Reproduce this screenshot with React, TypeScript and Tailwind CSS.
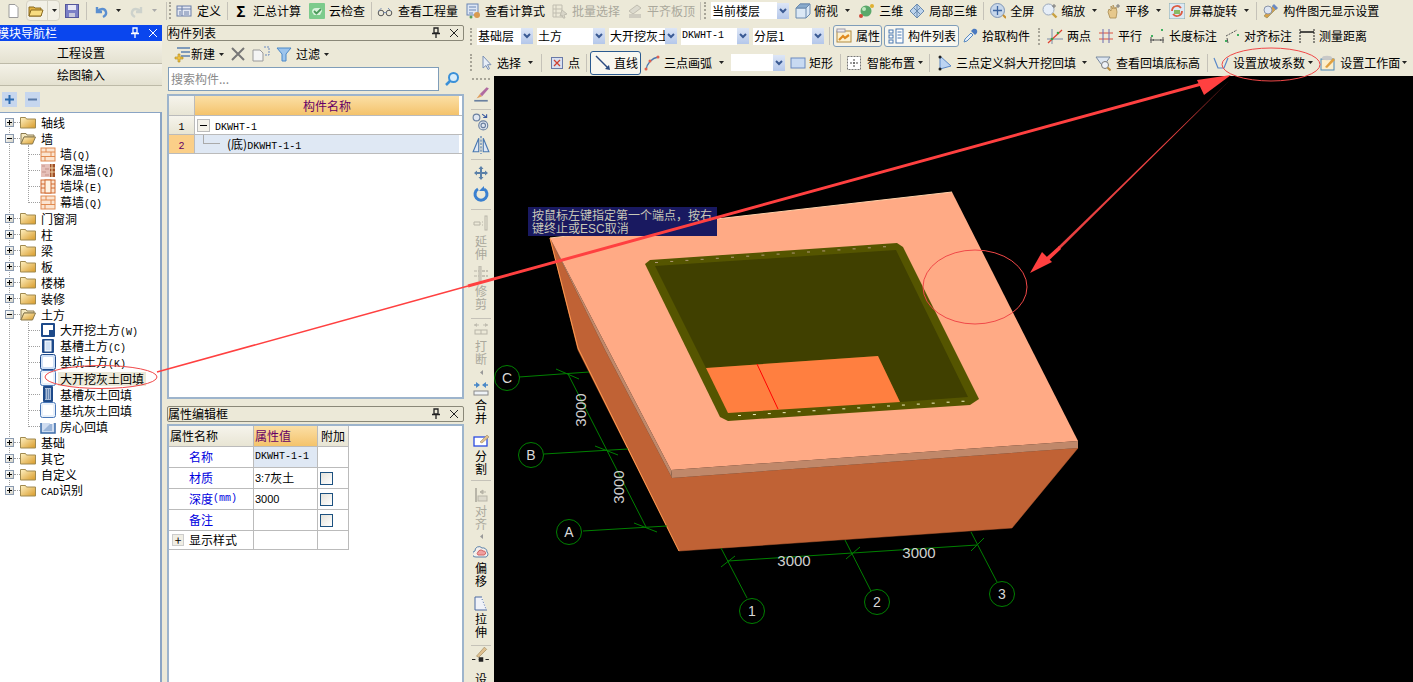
import type { ReactNode } from "react";

const Ic = ({ children, s = 16 }: { children: ReactNode; s?: number }) => (
  <svg width={s} height={s} viewBox="0 0 16 16" className="shrink-0">
    {children}
  </svg>
);

const Arrow = ({ className = "" }: { className?: string }) => (
  <svg width="5" height="3" viewBox="0 0 5 3" className={`shrink-0 ${className}`}>
    <path d="M0 0h5L2.5 3z" fill="#222" />
  </svg>
);

const ArrowGray = ({ className = "" }: { className?: string }) => (
  <svg width="5" height="3" viewBox="0 0 5 3" className={`shrink-0 ${className}`}>
    <path d="M0 0h5L2.5 3z" fill="#aaa" />
  </svg>
);

const Sep = ({ className = "" }: { className?: string }) => (
  <div className={`h-[18px] w-px shrink-0 bg-[#c5c2b8] ${className}`} />
);

const Grip = ({ className = "" }: { className?: string }) => (
  <div className={`h-[17px] w-[2px] shrink-0 border-l-2 border-dotted border-[#a8a598] ${className}`} />
);

const Combo = ({ w, text, className = "" }: { w: string; text?: ReactNode; className?: string }) => (
  <div className={`flex h-[17px] shrink-0 items-center ${className}`}>
    <div className={`flex h-[17px] items-center overflow-hidden whitespace-nowrap bg-white pl-px ${w}`}>{text}</div>
    <div className="flex h-[16px] w-[12px] items-center justify-center bg-gradient-to-b from-[#dde6f6] to-[#b4c7ea]">
      <svg width="8" height="6" viewBox="0 0 8 6">
        <path d="M1 1l3 3 3-3" fill="none" stroke="#3a5a94" strokeWidth="2" />
      </svg>
    </div>
  </div>
);

const Mono = ({ children }: { children: ReactNode }) => (
  <span className="font-['Liberation_Mono',monospace] text-[10px]">{children}</span>
);

/* toolbar icons */
const IFile = () => <Ic><path d="M4 1.5h6l3 3v10H4z" fill="#fff" stroke="#9a9a9a" /></Ic>;
const IOpen = () => <Ic><path d="M1 4h5l1 1h6v8H1z" fill="#e0b040" stroke="#8a6a20" /><path d="M3 7h12l-2 6H1z" fill="#f8dc80" stroke="#8a6a20" /></Ic>;
const ISave = () => <Ic><rect x="1.5" y="1.5" width="13" height="13" fill="#7b7fc6" stroke="#55579a" /><rect x="4" y="2" width="8" height="5" fill="#e8e8f4" /><rect x="5" y="10" width="6" height="4" fill="#c8c8dc" /></Ic>;
const IUndo = ({ c = "#5b8fd0" }: { c?: string }) => <Ic><path d="M4 4v5h5M4.5 8.5C7 5 12 5 13 9c.5 2-1 4-3 5" fill="none" stroke={c} strokeWidth="2.4" /></Ic>;
const IRedo = () => <Ic><path d="M12 4v5H7M11.500 8.500C9 5 4 5 3 9c-.5 2 1 4 3 5" fill="none" stroke="#cdd2cc" strokeWidth="2.4" /></Ic>;
const IDefine = () => <Ic><rect x="1" y="3" width="14" height="10" fill="#e4e8f2" stroke="#6a7fa8" /><path d="M6 3v10M1 6h14M8 9h5M8 11h5M3 9h2M3 11h2" stroke="#6a7fa8" /></Ic>;
const ICloud = () => <Ic><rect x="0" y="0" width="16" height="16" rx="1" fill="#7ccb8c" /><path d="M3 9a4 4 0 0 1 4-4h3a3 3 0 0 1 3 3l-2 4H5z" fill="#d8f2dc" /><path d="M5 8l2.500 2.500L12 6" fill="none" stroke="#4a9a5a" strokeWidth="1.800" /></Ic>;
const IGlasses = () => <Ic><circle cx="4" cy="10" r="2.800" fill="none" stroke="#555" /><circle cx="12" cy="10" r="2.800" fill="none" stroke="#555" /><path d="M6.500 9.500h3M1.500 8l3-3M11 5l3 3" stroke="#7a90b4" /></Ic>;
const ICalc = () => <Ic><rect x="1" y="1" width="11" height="11" fill="#dde6f4" stroke="#6a86b4" /><path d="M3 4h7M3 7h7M3 10h4" stroke="#6a86b4" /><circle cx="11" cy="12" r="3" fill="#d89a50" /><circle cx="5" cy="14" r="1.500" fill="#5aa05a" /></Ic>;
const IBatch = () => <Ic><path d="M1 2h9v12H1zM4 2v12M1 6h9M1 10h9" fill="none" stroke="#c0bdb0" /><path d="M10 7l5 4-3 1 1 3-2 0-1-3-2 1z" fill="#d8d5c8" stroke="#c0bdb0" /></Ic>;
const IAlignTop = () => <Ic><path d="M2 8l8-6 4 3-8 6z" fill="#dcdace" stroke="#c0bdb0" /><rect x="2" y="11" width="12" height="4" fill="#cfccc0" /></Ic>;
const ICube = () => <Ic><path d="M1 5l4-4h10v10l-4 4H1z" fill="#dbe8f5" stroke="#6a8aae" /><path d="M1 5h10v10M11 5l4-4" fill="none" stroke="#6a8aae" /><path d="M1 5h10L15 1H5z" fill="#88aacc" stroke="#6a8aae" /></Ic>;
const I3D = () => <Ic><circle cx="7" cy="8" r="5.500" fill="#5aa86a" /><circle cx="5" cy="6" r="2" fill="#bfe8c0" /><circle cx="2" cy="13" r="2" fill="#d04a3a" /><circle cx="13" cy="3" r="2" fill="#e0b030" /></Ic>;
const ILocal3D = () => <Ic><path d="M1 8l7-7 7 7-7 7z" fill="#bcd3ec" stroke="#6a8aae" /><path d="M4.500 4.500l7 7M11.500 4.500l-7 7M8 1v14" stroke="#6a8aae" /></Ic>;
const IFull = () => <Ic><circle cx="7.500" cy="7.500" r="7" fill="#c6d6ea" stroke="#7f95b5" /><path d="M7.500 3v9M3 7.500h9" stroke="#3c64a0" strokeWidth="1.300" /><path d="M13 12l3 3" stroke="#c89030" strokeWidth="2" /></Ic>;
const IZoom = () => <Ic><circle cx="6.500" cy="6.500" r="5.500" fill="#e6eef8" stroke="#9aa8bc" /><path d="M10.500 10.500l4 4" stroke="#c8a040" strokeWidth="2.400" /><path d="M12 1v4M10 3h4" stroke="#777" /></Ic>;
const IPan = () => <Ic><path d="M3 9l1-3 2 2V3l2 3V2l2 4 1-2 1 5-1 6H5z" fill="#e6c88c" stroke="#a88a50" strokeWidth=".8" /><path d="M13 1v4M11 3h4" stroke="#777" /></Ic>;
const IRot = () => <Ic><rect width="16" height="16" fill="#dce8f4" stroke="#8aa" /><path d="M3 8a5 5 0 0 1 9-3M13 8a5 5 0 0 1-9 3" fill="none" stroke="#dc5a40" strokeWidth="1.800" /><rect x="5" y="7" width="6" height="4" fill="#88bb66" /></Ic>;
const IDisplay = () => <Ic><path d="M1 13L10 3l3 3-9 9z" fill="#d8a048" stroke="#885" strokeWidth=".6" /><circle cx="5" cy="7" r="4" fill="#dfe6f2" stroke="#8a94a8" /><path d="M11 1l4 4-2 2-4-4z" fill="#6a8ac4" /></Ic>;
const IProp = () => <Ic><rect x="1" y="3" width="14" height="11" fill="#fdf1cf" stroke="#b08a40" /><rect x="1" y="1" width="8" height="3" fill="#eeeaf0" stroke="#9a9aa8" /><path d="M3 12l4-4 2 2 4-3" fill="none" stroke="#e08a20" strokeWidth="2.200" /></Ic>;
const IList = () => <Ic><rect x="1" y="2" width="4" height="3" fill="#fff" stroke="#4a78b0" /><rect x="1" y="7" width="4" height="3" fill="#fff" stroke="#4a78b0" /><rect x="1" y="12" width="4" height="3" fill="#fff" stroke="#4a78b0" /><rect x="8" y="1" width="7" height="14" fill="#fff" stroke="#4a78b0" /><path d="M9.500 4h4M9.500 7h4M9.500 10h4" stroke="#4a78b0" /></Ic>;
const IPicker = () => <Ic><path d="M2 14l1-3 6-6 2 2-6 6z" fill="#e6f0fa" stroke="#5a8ac0" /><path d="M9 3l4 4 2-2c1-3-1-5-4-4z" fill="#4a7ac0" /></Ic>;
const ITwoPt = () => <Ic><path d="M0 11h16M5 1v15" stroke="#7a8aa8" /><path d="M1 15L15 2" stroke="#e04030" strokeWidth="1.200" /><circle cx="5" cy="11" r="1.300" fill="#40a040" /><circle cx="11" cy="5" r="1.300" fill="#40a040" /></Ic>;
const IParallel = () => <Ic><path d="M1 5h14M1 11h14" stroke="#dc5040" /><path d="M5 1v14M11 1v14" stroke="#6a6ab0" /></Ic>;
const ILenDim = () => <Ic><path d="M1 12h14M2 9v6M14 9v6" stroke="#555" /><path d="M3 12l2-1v2zM13 12l-2-1v2z" fill="#555" /><rect x="2" y="7" width="2" height="2" fill="#40b060" /><rect x="12" y="1" width="2" height="2" fill="#40b060" /></Ic>;
const IAlignDim = () => <Ic><path d="M2 8L13 2" stroke="#555" strokeDasharray="2 1" /><path d="M3 10l1 5" stroke="#555" /><rect x="1" y="12" width="2" height="2" fill="#40b060" /><rect x="13" y="6" width="2" height="2" fill="#40b060" /></Ic>;
const IMeasure = () => <Ic><path d="M1 1v14M15 1v14" stroke="#222" strokeDasharray="2 1" /><path d="M1 4h14" stroke="#222" strokeWidth="1.600" /></Ic>;
const ICursor = () => <Ic><path d="M5 1v12l3-2.500 2 4 1.500-.8-2-4H13z" fill="#e8eef8" stroke="#7a90b4" /></Ic>;
const IPoint = () => <Ic><rect x="2.500" y="2.500" width="11" height="11" fill="#d8e0f0" stroke="#6a7aa8" /><path d="M5 5l6 6M11 5l-6 6" stroke="#d04030" strokeWidth="1.300" /></Ic>;
const ILine = () => <Ic><path d="M1 1l12 12" stroke="#2a4a80" strokeWidth="1.400" /><path d="M15 15l-5-1 4-4z" fill="#2a4a80" /></Ic>;
const IArc = () => <Ic><path d="M2 15C3 8 8 3 14 2" fill="none" stroke="#4a78b0" strokeWidth="1.300" /><circle cx="2" cy="14" r="1.500" fill="#e06050" /><circle cx="6" cy="6" r="1.500" fill="#e06050" /><circle cx="14" cy="2" r="1.500" fill="#e06050" /></Ic>;
const IRect = () => <Ic><rect x="1" y="3" width="14" height="10" fill="#c8daf2" stroke="#6a8ac0" /></Ic>;
const ISmart = () => <Ic><rect x="1.500" y="1.500" width="13" height="13" fill="#fff" stroke="#777" strokeDasharray="2 1" /><path d="M8 4v8M4 8h8" stroke="#444" strokeDasharray="2 1" /></Ic>;
const ITriPt = () => <Ic><path d="M3 1v13l11-3z" fill="#bcd4f2" stroke="#5a88c8" /><circle cx="3" cy="2" r="1.500" fill="#222" /><circle cx="3" cy="14" r="1.500" fill="#222" /></Ic>;
const IBottom = () => <Ic><path d="M1 2h14L10 9v3L6 9z" fill="#dde6f0" stroke="#7a8aa0" /><circle cx="10" cy="10" r="3.500" fill="#eef2f8" stroke="#7a7a7a" /><path d="M12.500 12.500l3 3" stroke="#c09040" strokeWidth="2" /></Ic>;
const ISlope = () => <Ic><path d="M1 3l4 10h6l4-10" fill="none" stroke="#5a88c8" strokeWidth="1.200" /></Ic>;
const IWorkPlane = () => <Ic><rect x="1" y="4" width="13" height="11" fill="#fbeecb" stroke="#4a88b8" /><ellipse cx="7" cy="3" rx="5" ry="2.200" fill="#c8c8c8" /><path d="M5 12l8-9 2 2-8 8z" fill="#e0a040" /></Ic>;

/* tree icons */
const IFolder = () => <Ic><path d="M0.500 3.500h5l1 1.500h9v9h-15z" fill="url(#fold)" stroke="#a08a50" /></Ic>;
const IFolderOpen = () => <Ic><path d="M1 3.500h5l1 1.500h7v2H4L1 14z" fill="#f4e8c0" stroke="#8a7a50" /><path d="M4 7h11.500l-3 7H1z" fill="url(#fold)" stroke="#8a7a50" /></Ic>;
const IBrick = () => <Ic><rect x="1" y="2" width="14" height="13" fill="#fbe4d0" stroke="#e08a50" /><path d="M1 6h14M1 10.500h14M6 2v4M11 6v4.500M5 10.500V15" stroke="#e08a50" /></Ic>;
const IInsul = () => <Ic><rect x="1" y="2" width="9" height="13" fill="#e6c0b8" /><path d="M2 4h3M5 7h4M2 10h4M5 13h4" stroke="#c49088" /><rect x="10" y="2" width="5" height="13" fill="#a05028" /><path d="M12 2v13M10 6h5M10 10h5" stroke="#f0d0a0" /></Ic>;
const IPier = () => <Ic><rect x="1" y="2" width="14" height="13" fill="#fbe4d0" stroke="#d06a30" /><rect x="5" y="2" width="6" height="13" fill="#fff4e4" stroke="#d06a30" /><path d="M11 6h4M11 10h4M1 6h4M1 10h4" stroke="#d06a30" /></Ic>;
const IExc1 = () => <Ic><rect x="1" y="1" width="14" height="14" rx="1" fill="#1e4a8a" /><path d="M3 3h10v5H9v5H3z" fill="#fff" /></Ic>;
const IExc2 = () => <Ic><rect x="2" y="1" width="12" height="14" rx="1" fill="#1e4a8a" /><rect x="5" y="3" width="6" height="10" fill="#cfe0f4" stroke="#fff" /></Ic>;
const IExc3 = () => <Ic><rect x=".5" y=".5" width="15" height="15" rx="2" fill="#cfe0f6" stroke="#1e4a8a" /><rect x="3" y="3" width="10" height="10" rx="1" fill="#fff" /></Ic>;
const IExc4 = () => <Ic><rect x=".5" y=".5" width="15" height="15" rx="2" fill="#e8f0fa" stroke="#4a78b8" /><rect x="3" y="3" width="10" height="10" fill="#fff" /></Ic>;
const IExc5 = () => <Ic><rect x="3" y="0" width="10" height="16" rx="1" fill="#1e4a8a" /><rect x="5" y="2" width="6" height="12" fill="#a8bcd8" /><path d="M5 4h6M5 6h6M5 8h6M5 10h6M5 12h6" stroke="#1e4a8a" strokeDasharray="1 1" /></Ic>;
const IRoom = () => <Ic><path d="M1 5v10h14V5" fill="#cfdcf0" stroke="#3a6aa8" strokeWidth="1.500" /><path d="M3 13l9-9v9z" fill="#9ab4d8" /><rect x="10" y="3" width="3" height="3" fill="#fff" /></Ic>;

/* side bar icons */
const IBrush = () => <Ic s={18}><path d="M2 14h12" stroke="#6a80a0" strokeWidth="1.500" /><path d="M4 12l3-4 2 2z" fill="#e0a060" /><path d="M7 8l6-6 2 1-6 7z" fill="#b06aa0" /></Ic>;
const ICircles = () => <Ic s={18}><circle cx="4" cy="4" r="3" fill="#dfe6f0" stroke="#6a80a0" /><circle cx="10" cy="11" r="4" fill="#dfe6f0" stroke="#6a80a0" /><circle cx="10" cy="11" r="2" fill="none" stroke="#6a80a0" /><path d="M9 1l4 3M13 1v3h-3" fill="none" stroke="#3a5aa0" /></Ic>;
const IMirror = () => <Ic s={18}><path d="M6 2L1 14h5zM10 2l5 12h-5z" fill="#dfe8f4" stroke="#4a78b0" /><path d="M8 0v16" stroke="#4a78b0" strokeDasharray="2 1" /></Ic>;
const IMove = () => <Ic s={16}><path d="M8 1l2.500 3H9v3h3V5.500L15 8l-3 2.500V9H9v3h1.500L8 15l-2.500-3H7V9H4v1.500L1 8l3-2.500V7h3V4H5.500z" fill="#5a80a8" /></Ic>;
const IRotate = () => <Ic s={16}><path d="M5 3a6 6 0 1 0 6 0" fill="none" stroke="#3a80d0" strokeWidth="3" /><path d="M11 0v5h-5z" fill="#3a80d0" /></Ic>;
const IExtend = () => <Ic s={16}><path d="M1 7h6v3H1zM9 7h1M9 10h1" fill="none" stroke="#b8b5a8" /><rect x="12" y="1" width="2" height="14" fill="none" stroke="#b8b5a8" /></Ic>;
const ITrim = () => <Ic s={16}><path d="M1 5h14M1 10h14M9 5h6M9 10h6" stroke="#b8b5a8" strokeDasharray="3 1" /><rect x="6" y="0" width="2" height="15" fill="#dcd9cc" stroke="#b8b5a8" /></Ic>;
const IBreak = () => <Ic s={16}><path d="M1 4h5M15 4h-5" stroke="#c0bdb0" /><path d="M1 4l3-2v4zM15 4l-3-2v4z" fill="#c0bdb0" /><rect x="2" y="9" width="12" height="4" fill="none" stroke="#b8b5a8" /><path d="M8 9v4" stroke="#b8b5a8" /></Ic>;
const IMerge = () => <Ic s={16}><path d="M1 3h5M15 3h-5" stroke="#4a88c8" strokeWidth="1.300" /><path d="M7 3L3 0v6zM9 3l4-3v6z" fill="#4a88c8" /><rect x="1" y="9" width="14" height="4" fill="#eef2f6" stroke="#888" /></Ic>;
const ISplit = () => <Ic s={16}><rect x="1" y="5" width="13" height="9" fill="#fff" stroke="#2a4ae0" strokeWidth="1.300" /><path d="M7 10l7-7 2 2-7 6z" fill="#e0c090" stroke="#a08a60" strokeWidth=".6" /></Ic>;
const IAlignSide = () => <Ic s={16}><path d="M3 1v14" stroke="#b8b5a8" strokeWidth="2" /><rect x="5" y="9" width="9" height="5" fill="#dcd9cc" stroke="#b8b5a8" /><path d="M13 5H7M7 5l3-2v4z" fill="#b8b5a8" stroke="#b8b5a8" /></Ic>;
const IOffset = () => <Ic s={16}><path d="M3 13a3 3 0 0 1-1-6 4 4 0 0 1 7-3 4 4 0 0 1 5 4 3 3 0 0 1-1 5z" fill="#f4f0ec" stroke="#5a80a8" /><path d="M5 11a2 2 0 0 1 0-3 3 3 0 0 1 5-1 2 2 0 0 1 1 4z" fill="#f0a0a0" stroke="#d06060" /></Ic>;
const IStretch = () => <Ic s={16}><path d="M2 1h7l5 13H2z" fill="#f0f2f8" /><path d="M2 1h7M2 1v13h12" fill="none" stroke="#4a68a0" /><path d="M9 3l4 10" stroke="#4a68a0" strokeDasharray="1 2" /></Ic>;
const ISet = () => <Ic s={18}><path d="M0 12h16" stroke="#222" strokeDasharray="3 3" /><path d="M4 9l7-8 2 2-7 7z" fill="#e0c090" stroke="#a08a60" strokeWidth=".6" /><rect x="6" y="10" width="4" height="4" fill="#222" /></Ic>;

const treeData: { label: ReactNode; open?: boolean; kids?: { label: ReactNode; icon: ReactNode; sel?: boolean }[] }[] = [
  { label: "轴线" },
  {
    label: "墙",
    open: true,
    kids: [
      { label: <>墙<Mono>(Q)</Mono></>, icon: <IBrick /> },
      { label: <>保温墙<Mono>(Q)</Mono></>, icon: <IInsul /> },
      { label: <>墙垛<Mono>(E)</Mono></>, icon: <IPier /> },
      { label: <>幕墙<Mono>(Q)</Mono></>, icon: <IBrick /> },
    ],
  },
  { label: "门窗洞" },
  { label: "柱" },
  { label: "梁" },
  { label: "板" },
  { label: "楼梯" },
  { label: "装修" },
  {
    label: "土方",
    open: true,
    kids: [
      { label: <>大开挖土方<Mono>(W)</Mono></>, icon: <IExc1 /> },
      { label: <>基槽土方<Mono>(C)</Mono></>, icon: <IExc2 /> },
      { label: <>基坑土方<Mono>(K)</Mono></>, icon: <IExc3 /> },
      { label: "大开挖灰土回填", icon: <IExc4 />, sel: true },
      { label: "基槽灰土回填", icon: <IExc5 /> },
      { label: "基坑灰土回填", icon: <IExc4 /> },
      { label: "房心回填", icon: <IRoom /> },
    ],
  },
  { label: "基础" },
  { label: "其它" },
  { label: "自定义" },
  { label: <><Mono>CAD</Mono>识别</> },
];

const Expander = ({ open }: { open?: boolean }) => (
  <div className="relative flex h-[9px] w-[9px] shrink-0 items-center justify-center border border-[#8a9ab0] bg-gradient-to-br from-white to-[#d8d5c8]">
    <div className="h-px w-[5px] bg-black" />
    {!open && <div className="absolute h-[5px] w-px bg-black" />}
  </div>
);

const TitleBtns = ({ dark }: { dark?: boolean }) => {
  const c = dark ? "#fff" : "#222";
  return (
    <div className="flex items-center gap-[6px]">
      <svg width="12" height="12" viewBox="0 0 12 12">
        <path d="M4 1h4v5H4zM2 6.500h8M6 7v4" fill="none" stroke={c} strokeWidth="1.300" />
      </svg>
      <svg width="12" height="12" viewBox="0 0 12 12">
        <path d="M2 2l8 8M10 2l-8 8" stroke={c} />
      </svg>
    </div>
  );
};

const Check = () => <div className="h-[13px] w-[13px] border border-[#1c5180] bg-gradient-to-br from-[#e4e2da] to-white" />;

const propRows: { name: ReactNode; val?: ReactNode; check?: boolean; sel?: boolean }[] = [
  { name: "名称", val: <Mono>DKWHT-1-1</Mono>, sel: true },
  { name: "材质", val: <><span className="font-['Liberation_Sans',sans-serif] text-[11px]">3:7</span>灰土</>, check: true },
  { name: <>深度<Mono>(mm)</Mono></>, val: <span className="font-['Liberation_Sans',sans-serif] text-[11px]">3000</span>, check: true },
  { name: "备注", check: true },
];

const VText = ({ chars, gray, className = "" }: { chars: string[]; gray?: boolean; className?: string }) => (
  <div className={`flex flex-col items-center text-[12px] leading-[13px] ${gray ? "text-[#aaa89c]" : "text-black"} ${className}`}>
    {chars.map((c) => (
      <span key={c}>{c}</span>
    ))}
  </div>
);

const VSep = ({ className = "" }: { className?: string }) => <div className={`h-px w-[20px] shrink-0 bg-[#c5c2b8] ${className}`} />;
const LeftTri = ({ className = "" }: { className?: string }) => (
  <svg width="3" height="5" viewBox="0 0 3 5" className={className}>
    <path d="M3 0v5L0 2.500z" fill="#999" />
  </svg>
);

function Scene() {
  const top = Array.from({ length: 16 }, (_, i) => [655 + i * 15.2, 262.5 - i * 1.05]);
  const bottom = Array.from({ length: 16 }, (_, i) => [738 + i * 14.9, 415.5 - i * 0.95]);
  const g = "#008000";
  return (
    <svg width="919" height="606" viewBox="494 76 919 606" className="block">
      {/* left and front faces */}
      <polygon points="550,238 578,350 679,551 1012,528 1078,448 672,478 605,350" fill="#c06235" stroke="#c06235" strokeWidth="0.500" />
      <polygon points="550,238 671,470 672,478 605,350" fill="#c0886a" />
      <polygon points="671,470 1078,441 1078,448 672,478" fill="#c0886a" />
      <polygon points="550,238 952,192 1078,441 671,470" fill="#ffaa85" />
      <path d="M550 238L952 192" stroke="#ffd0a8" strokeWidth="1" />
      <path d="M550 238L578 348L679 551" fill="none" stroke="#ff9a50" strokeWidth="1" />
      {/* pit */}
      <polygon points="645,264 650,260 897,243 903,247 979,399 970,405 728,421 720,417" fill="#555500" />
      <polygon points="655,266 896,250 968,397 900,402 878,356 706,368" fill="#404000" />
      <polygon points="706,368 878,356 900,402 728,413" fill="#ff7f40" />
      <path d="M757 364L778 409" stroke="#ff0000" strokeWidth="1" />
      {top.map(([x, y]) => (
        <path key={x} d={`M${x} ${y}h3`} stroke="#b09878" strokeWidth="1" />
      ))}
      {bottom.map(([x, y]) => (
        <path key={x} d={`M${x} ${y}h3`} stroke="#f4f0c0" strokeWidth="1" />
      ))}
      {/* grid axes */}
      <g stroke={g} strokeWidth="1" fill="none">
        <path d="M519 377L589 372M544 454L628 449M583 531L667 526M568 374L646 527" />
        <path d="M556 369L579 379M595 446L618 455M634 523L657 532" />
        <path d="M728 561L977 545M721 548L747 598M845 540L871 591M971 532L997 582" />
        <path d="M721 567L735 556M846 559L860 547M971 551L984 538" />
        <circle cx="507" cy="378" r="12.500" />
        <circle cx="531" cy="455" r="12.500" />
        <circle cx="569" cy="532" r="12.500" />
        <circle cx="752" cy="611" r="12.500" />
        <circle cx="877" cy="602" r="12.500" />
        <circle cx="1002" cy="594" r="12.500" />
      </g>
      <g fill="#d8d8d8" fontFamily="Liberation Sans, sans-serif" fontSize="14" textAnchor="middle">
        <text x="507" y="383">C</text>
        <text x="531" y="460">B</text>
        <text x="569" y="537">A</text>
        <text x="752" y="616">1</text>
        <text x="877" y="607">2</text>
        <text x="1002" y="599">3</text>
      </g>
      <g fill="#d0d0d0" fontFamily="Liberation Sans, sans-serif" fontSize="15" textAnchor="middle">
        <text x="794" y="566">3000</text>
        <text x="919" y="558">3000</text>
        <text x="0" y="0" transform="translate(586 410) rotate(-90)">3000</text>
        <text x="0" y="0" transform="translate(624 487) rotate(-90)">3000</text>
      </g>
    </svg>
  );
}

export default function App() {
  return (
    <div className="relative flex h-[682px] w-[1413px] flex-col overflow-hidden bg-[#ece9d8] font-['Noto_Sans_CJK_SC',sans-serif] text-[12px] leading-[14px] text-black">
      <svg width="0" height="0" className="absolute">
        <defs>
          <linearGradient id="fold" x1="0" y1="0" x2="1" y2="1">
            <stop offset="0" stopColor="#fff2c4" />
            <stop offset="1" stopColor="#d89a28" />
          </linearGradient>
        </defs>
      </svg>

      {/* main toolbar */}
      <div className="flex h-[23px] shrink-0 items-center whitespace-nowrap pb-[2px]">
        <div className="ml-[5px]"><IFile /></div>
        <div className="ml-[5px] flex h-[21px] w-[34px] shrink-0 items-center rounded-sm border border-[#d5d2c4] bg-[#f2f0e6] pl-px">
          <IOpen />
          <div className="ml-[3px] h-[19px] w-px bg-[#d5d2c4]" />
          <Arrow className="ml-[4px]" />
        </div>
        <div className="ml-[4px]"><ISave /></div>
        <Sep className="ml-[6px]" />
        <div className="ml-[6px]"><IUndo /></div>
        <Arrow className="ml-[7px]" />
        <div className="ml-[8px]"><IRedo /></div>
        <ArrowGray className="ml-[7px]" />
        <Sep className="ml-[9px]" />
        <Grip className="ml-[2px]" />
        <div className="ml-[5px]"><IDefine /></div>
        <span className="ml-[5px]">定义</span>
        <Sep className="ml-[6px]" />
        <div className="ml-[5px] flex w-[16px] justify-center text-[15px] font-bold">Σ</div>
        <span className="ml-[4px]">汇总计算</span>
        <div className="ml-[8px]"><ICloud /></div>
        <span className="ml-[4px]">云检查</span>
        <Sep className="ml-[6px]" />
        <div className="ml-[5px]"><IGlasses /></div>
        <span className="ml-[5px]">查看工程量</span>
        <div className="ml-[8px]"><ICalc /></div>
        <span className="ml-[3px]">查看计算式</span>
        <div className="ml-[7px]"><IBatch /></div>
        <span className="ml-[4px] text-[#aaa89c]">批量选择</span>
        <div className="ml-[7px]"><IAlignTop /></div>
        <span className="ml-[4px] text-[#aaa89c]">平齐板顶</span>
        <Sep className="ml-[5px]" />
        <Grip className="ml-[3px]" />
        <Combo w="w-[66px]" text="当前楼层" className="ml-[5px]" />
        <div className="ml-[6px]"><ICube /></div>
        <span className="ml-[3px]">俯视</span>
        <Arrow className="ml-[7px]" />
        <div className="ml-[9px]"><I3D /></div>
        <span className="ml-[4px]">三维</span>
        <div className="ml-[6px]"><ILocal3D /></div>
        <span className="ml-[4px]">局部三维</span>
        <Sep className="ml-[6px]" />
        <div className="ml-[6px]"><IFull /></div>
        <span className="ml-[4px]">全屏</span>
        <div className="ml-[8px]"><IZoom /></div>
        <span className="ml-[3px]">缩放</span>
        <Arrow className="ml-[7px]" />
        <div className="ml-[8px]"><IPan /></div>
        <span className="ml-[4px]">平移</span>
        <Arrow className="ml-[7px]" />
        <div className="ml-[8px]"><IRot /></div>
        <span className="ml-[4px]">屏幕旋转</span>
        <Arrow className="ml-[7px]" />
        <Sep className="ml-[7px]" />
        <div className="ml-[6px]"><IDisplay /></div>
        <span className="ml-[4px]">构件图元显示设置</span>
      </div>

      <div className="flex min-h-0 flex-1">
        {/* navigation panel */}
        <div className="flex w-[162px] shrink-0 flex-col pt-[2px]">
          <div className="flex h-[16px] shrink-0 items-center justify-between bg-[#0a46ee] pr-[3px] whitespace-nowrap text-white">
            <span className="-ml-[3px]">模块导航栏</span>
            <TitleBtns dark />
          </div>
          <div className="flex h-[23px] shrink-0 items-center justify-center border-b border-[#bdbaa8] bg-gradient-to-b from-[#f4f2e8] to-[#e4e1d0] pt-px">工程设置</div>
          <div className="flex h-[22px] shrink-0 items-center justify-center border-b border-[#bdbaa8] bg-gradient-to-b from-[#f4f2e8] to-[#e4e1d0]">绘图输入</div>
          <div className="flex h-[26px] shrink-0 items-center gap-[8px] pl-[2px]">
            <div className="flex h-[15px] w-[15px] items-center justify-center bg-[#c6d6ee]">
              <svg width="11" height="11" viewBox="0 0 11 11"><path d="M5.500 1v9M1 5.500h9" stroke="#2a6ab0" strokeWidth="2" /></svg>
            </div>
            <div className="flex h-[15px] w-[15px] items-center justify-center bg-[#c6d6ee]">
              <svg width="11" height="11" viewBox="0 0 11 11"><path d="M1 5.500h9" stroke="#5a7aa8" strokeWidth="2" /></svg>
            </div>
          </div>
          <div className="relative min-h-0 flex-1 border-t border-r-2 border-[#8aa4c4] bg-white pt-px">
            <div className="absolute top-[9px] left-[9px] h-[369px] border-l border-dotted border-[#a0a0a0]" />
            <div className="absolute top-[32px] left-[28px] h-[58px] border-l border-dotted border-[#a0a0a0]" />
            <div className="absolute top-[209px] left-[28px] h-[105px] border-l border-dotted border-[#a0a0a0]" />
            {treeData.map((n, i) => (
              <div key={i}>
                <div className="relative flex h-[16px] items-center">
                  <div className="ml-[5px]"><Expander open={n.open} /></div>
                  <div className="w-[6px] border-t border-dotted border-[#a0a0a0]" />
                  {n.open ? <IFolderOpen /> : <IFolder />}
                  <span className="relative top-px ml-[5px] whitespace-nowrap">{n.label}</span>
                </div>
                {n.kids?.map((k, j) => (
                  <div key={j} className="relative flex h-[16px] items-center">
                    <div className="ml-[28px] w-[12px] border-t border-dotted border-[#a0a0a0]" />
                    {k.icon}
                    <span className={`relative top-px whitespace-nowrap ${k.sel ? "ml-[2px] bg-[#ece9d8] px-[2px]" : "ml-[4px]"}`}>{k.label}</span>
                  </div>
                ))}
              </div>
            ))}
          </div>
        </div>

        {/* list and property panels */}
        <div className="ml-[5px] flex w-[297px] shrink-0 flex-col pt-[2px]">
          <div className="flex h-[16px] shrink-0 items-center justify-between rounded-[2px] border border-[#8a8878] pr-[3px] whitespace-nowrap">
            <span>构件列表</span>
            <TitleBtns />
          </div>
          <div className="flex h-[26px] shrink-0 items-center">
            <div className="ml-[5px]">
              <svg width="18" height="18" viewBox="0 0 18 18">
                <path d="M5 3h13M9 7h9M9 11h9" stroke="#5a80b0" strokeWidth="1.300" />
                <path d="M3 12h3V9h2v3h3v2H8v3H6v-3H3z" fill="#f0c040" stroke="#b08a20" strokeWidth=".6" />
              </svg>
            </div>
            <span className="ml-px">新建</span>
            <Arrow className="ml-[4px]" />
            <svg width="14" height="14" viewBox="0 0 14 14" className="ml-[7px]">
              <path d="M1 1l12 12M13 1L1 13" stroke="#777" strokeWidth="2" />
            </svg>
            <svg width="18" height="16" viewBox="0 0 18 16" className="ml-[7px]">
              <path d="M1 4h7l3 3v8H1z" fill="#f4f4f4" stroke="#999" />
              <path d="M12 1h5v8h-5" fill="none" stroke="#6a8ac0" strokeDasharray="2 1" />
            </svg>
            <svg width="16" height="16" viewBox="0 0 16 16" className="ml-[6px]">
              <path d="M1 2h14L10 8v7H6V8z" fill="#9cc4ec" stroke="#4a88c8" />
            </svg>
            <span className="ml-[4px]">过滤</span>
            <Arrow className="ml-[4px]" />
          </div>
          <div className="flex h-[24px] shrink-0 items-center pl-px">
            <div className="flex h-[24px] w-[271px] items-center border border-[#7f9db9] bg-white pl-[2px] text-[#8a8a8a]">搜索构件...</div>
            <div className="ml-[5px] flex w-[16px] justify-center">
              <svg width="16" height="16" viewBox="0 0 16 16">
                <circle cx="9.500" cy="6.500" r="4.500" fill="#d8ecfa" stroke="#3a90d8" strokeWidth="2" />
                <path d="M6 10l-4 4" stroke="#3a90d8" strokeWidth="2.500" />
              </svg>
            </div>
          </div>
          <div className="mt-[3px] h-[305px] shrink-0 border-2 border-[#9db4cc] bg-white">
            <div className="flex h-[20px] border-b border-[#bbb]">
              <div className="w-[26px] border-r border-[#bbb] bg-gradient-to-b from-[#f6f4ec] to-[#e8e5d4]" />
              <div className="flex w-[264px] items-center justify-center bg-gradient-to-b from-[#fbdfa5] to-[#f4c36b] text-[#660066]">构件名称</div>
            </div>
            <div className="flex h-[19px] border-b border-[#bbb]">
              <div className="flex w-[26px] items-center justify-center border-r border-[#bbb] bg-gradient-to-b from-[#f6f4ec] to-[#e8e5d4]"><span className="relative top-px"><Mono>1</Mono></span></div>
              <div className="flex w-[264px] items-center pl-[2px]">
                <div className="flex h-[13px] w-[13px] items-center justify-center border border-[#bbb] bg-[#f4f2ea]">
                  <div className="h-px w-[7px] bg-black" />
                </div>
                <span className="relative top-px ml-[5px]"><Mono>DKWHT-1</Mono></span>
              </div>
            </div>
            <div className="flex h-[19px] border-b border-[#bbb]">
              <div className="flex w-[26px] items-center justify-center border-r border-[#bbb] bg-[#fbcf88] text-[#660066]"><span className="relative top-px"><Mono>2</Mono></span></div>
              <div className="flex w-[264px] items-center bg-[#dfe8f4] pl-[8px]">
                <div className="h-[9px] w-[17px] -translate-y-[5px] border-b border-l border-[#aaa]" />
                <span className="relative top-px ml-[7px] whitespace-nowrap">(底)<Mono>DKWHT-1-1</Mono></span>
              </div>
            </div>
          </div>

          <div className="mt-[7px] flex h-[16px] shrink-0 items-center justify-between rounded-[2px] border border-[#8a8878] pr-[3px] whitespace-nowrap">
            <span>属性编辑框</span>
            <TitleBtns />
          </div>
          <div className="mt-[2px] min-h-0 flex-1 border-2 border-b-0 border-[#9db4cc] bg-white">
            <div className="w-[180px]">
              <div className="flex h-[21px] border-b border-[#bbb]">
                <div className="flex w-[85px] items-center border-r border-[#bbb] bg-gradient-to-b from-[#f6f4ec] to-[#e8e5d4] pl-px">属性名称</div>
                <div className="flex w-[64px] items-center border-r border-[#bbb] bg-gradient-to-b from-[#fbdfa5] to-[#f4c36b] pl-px text-[#660066]">属性值</div>
                <div className="flex w-[31px] items-center justify-center border-r border-[#bbb] bg-gradient-to-b from-[#f6f4ec] to-[#e8e5d4]">附加</div>
              </div>
              {propRows.map((r, i) => (
                <div key={i} className="flex h-[21px] border-b border-[#bbb]">
                  <div className="flex w-[85px] items-center border-r border-[#bbb] pl-[20px] text-[#0000e0]">{r.name}</div>
                  <div className={`flex w-[64px] items-center border-r border-[#bbb] pl-px ${r.sel ? "bg-[#dfe8f4]" : ""}`}>{r.val}</div>
                  <div className="flex w-[31px] items-center border-r border-[#bbb] pl-[2px]">{r.check && <Check />}</div>
                </div>
              ))}
              <div className="flex h-[19px] border-b border-[#bbb]">
                <div className="flex w-[85px] items-center border-r border-[#bbb] pl-[3px]">
                  <div className="flex h-[12px] w-[12px] items-center justify-center border border-[#ccc] bg-[#f0eee4] text-[12px] leading-none">+</div>
                  <span className="ml-[5px]">显示样式</span>
                </div>
                <div className="w-[64px] border-r border-[#bbb]" />
                <div className="w-[31px] border-r border-[#bbb]" />
              </div>
            </div>
          </div>
        </div>

        {/* drawing area */}
        <div className="ml-[4px] flex min-w-0 flex-1 flex-col pt-px">
          <div className="flex h-[24px] shrink-0 items-center whitespace-nowrap">
            <Grip className="ml-[2px]" />
            <Combo w="w-[44px]" text="基础层" className="ml-[5px]" />
            <Combo w="w-[56px]" text="土方" className="ml-[4px]" />
            <Combo w="w-[56px]" text="大开挖灰土回填" className="ml-[4px]" />
            <Combo w="w-[56px]" text={<Mono>DKWHT-1</Mono>} className="ml-[4px]" />
            <Combo w="w-[59px]" text="分层1" className="ml-[4px]" />
            <Sep className="ml-[5px]" />
            <div className="ml-[3px] flex h-[22px] w-[49px] shrink-0 items-center rounded-[3px] border border-[#7f9db9] bg-[#f4f2e8] pl-[2px]">
              <IProp />
              <span className="ml-[4px]">属性</span>
            </div>
            <div className="ml-[2px] flex h-[22px] w-[75px] shrink-0 items-center rounded-[3px] border border-[#7f9db9] bg-[#f8f7f0] pl-[3px]">
              <IList />
              <span className="ml-[4px]">构件列表</span>
            </div>
            <div className="ml-[3px]"><IPicker /></div>
            <span className="ml-[4px]">拾取构件</span>
            <Grip className="ml-[8px]" />
            <div className="ml-[7px]"><ITwoPt /></div>
            <span className="ml-[4px]">两点</span>
            <div className="ml-[7px]"><IParallel /></div>
            <span className="ml-[4px]">平行</span>
            <div className="ml-[7px]"><ILenDim /></div>
            <span className="ml-[4px]">长度标注</span>
            <div className="ml-[7px]"><IAlignDim /></div>
            <span className="ml-[4px]">对齐标注</span>
            <div className="ml-[7px]"><IMeasure /></div>
            <span className="ml-[4px]">测量距离</span>
          </div>
          <div className="mt-[2px] flex h-[25px] shrink-0 items-center whitespace-nowrap">
            <Grip className="ml-[2px]" />
            <div className="ml-[6px]"><ICursor /></div>
            <span className="ml-[3px]">选择</span>
            <Arrow className="ml-[7px]" />
            <Sep className="ml-[8px]" />
            <div className="ml-[7px]"><IPoint /></div>
            <span className="ml-[3px]">点</span>
            <Sep className="ml-[6px]" />
            <div className="ml-[3px] flex h-[24px] w-[51px] shrink-0 items-center rounded-[3px] border border-[#2a5a90] bg-[#f8f7f0] pl-[4px]">
              <ILine />
              <span className="ml-[3px]">直线</span>
            </div>
            <div className="ml-[3px]"><IArc /></div>
            <span className="ml-[4px]">三点画弧</span>
            <Arrow className="ml-[7px]" />
            <Combo w="w-[42px]" className="ml-[7px]" />
            <div className="ml-[5px]"><IRect /></div>
            <span className="ml-[3px]">矩形</span>
            <Sep className="ml-[7px]" />
            <div className="ml-[5px]"><ISmart /></div>
            <span className="ml-[5px]">智能布置</span>
            <Arrow className="ml-[3px]" />
            <Sep className="ml-[6px]" />
            <div className="ml-[7px]"><ITriPt /></div>
            <span className="ml-[3px]">三点定义斜大开挖回填</span>
            <Arrow className="ml-[6px]" />
            <div className="ml-[8px]"><IBottom /></div>
            <span className="ml-[5px]">查看回填底标高</span>
            <Sep className="ml-[7px]" />
            <div className="ml-[5px]"><ISlope /></div>
            <span className="ml-[4px]">设置放坡系数</span>
            <Arrow className="ml-[3px]" />
            <div className="ml-[7px]"><IWorkPlane /></div>
            <span className="ml-[4px]">设置工作面</span>
            <Arrow className="ml-[2px]" />
          </div>
          <div className="mt-px flex min-h-0 flex-1">
            <div className="flex w-[26px] shrink-0 flex-col items-center overflow-hidden">
              <div className="mt-[2px] h-[2px] w-[18px] shrink-0 border-t-2 border-dotted border-[#a8a598]" />
              <div className="mt-[5px]"><IBrush /></div>
              <VSep className="mt-[6px]" />
              <div className="mt-[3px]"><ICircles /></div>
              <div className="mt-[5px]"><IMirror /></div>
              <VSep className="mt-[5px]" />
              <div className="mt-[5px]"><IMove /></div>
              <div className="mt-[5px]"><IRotate /></div>
              <VSep className="mt-[7px]" />
              <div className="mt-[5px]"><IExtend /></div>
              <VText chars={["延", "伸"]} gray className="mt-[3px]" />
              <div className="mt-[6px]"><ITrim /></div>
              <VText chars={["修", "剪"]} gray className="mt-[2px]" />
              <VSep className="mt-[8px]" />
              <div className="mt-[2px]"><IBreak /></div>
              <VText chars={["打", "断"]} gray className="mt-[2px]" />
              <LeftTri className="mt-[5px] shrink-0" />
              <div className="mt-[7px]"><IMerge /></div>
              <VText chars={["合", "并"]} />
              <div className="mt-[8px]"><ISplit /></div>
              <VText chars={["分", "割"]} className="mt-px" />
              <VSep className="mt-[5px]" />
              <div className="mt-[6px]"><IAlignSide /></div>
              <VText chars={["对", "齐"]} gray className="mt-px" />
              <LeftTri className="mt-[4px] shrink-0" />
              <div className="mt-[5px]"><IOffset /></div>
              <VText chars={["偏", "移"]} className="mt-px" />
              <div className="mt-[9px]"><IStretch /></div>
              <VText chars={["拉", "伸"]} />
              <VSep className="mt-[7px]" />
              <div><ISet /></div>
              <VText chars={["设"]} className="mt-[8px]" />
            </div>
            <div className="relative min-w-0 flex-1 bg-black">
              <Scene />
              <div className="absolute top-[131px] left-[34px] h-[29px] w-[189px] bg-[#191960] pt-px pl-[4px] leading-[13px] text-[#c8c8b8]">
                按鼠标左键指定第一个端点，按右
                <br />
                键终止或<span className="font-['Liberation_Sans',sans-serif]">ESC</span>取消
              </div>
            </div>
          </div>
        </div>
      </div>

      {/* red annotations over the window */}
      <svg width="1413" height="682" viewBox="0 0 1413 682" className="pointer-events-none absolute top-0 left-0">
        <ellipse cx="101" cy="377" rx="56" ry="11.500" fill="none" stroke="#f04848" />
        <path d="M157 372L468 286" stroke="#ff4040" strokeWidth="1.500" />
        <path d="M468 286L1205 83" stroke="#ff4040" strokeWidth="3" />
        <polygon points="1197,80 1231,75 1204,95" fill="#ff4040" />
        <ellipse cx="1271" cy="64.500" rx="49" ry="16.500" fill="none" stroke="#f04848" />
        <polygon points="1230,80 1058,247 1060,249" fill="#e84040" />
        <polygon points="1030,273 1042,252 1052,262" fill="#ff4040" />
        <polygon points="1040,263 1059,246 1061,249 1043,266" fill="#ff4040" />
        <ellipse cx="975" cy="287" rx="52" ry="37" fill="none" stroke="#f04848" />
      </svg>
    </div>
  );
}
